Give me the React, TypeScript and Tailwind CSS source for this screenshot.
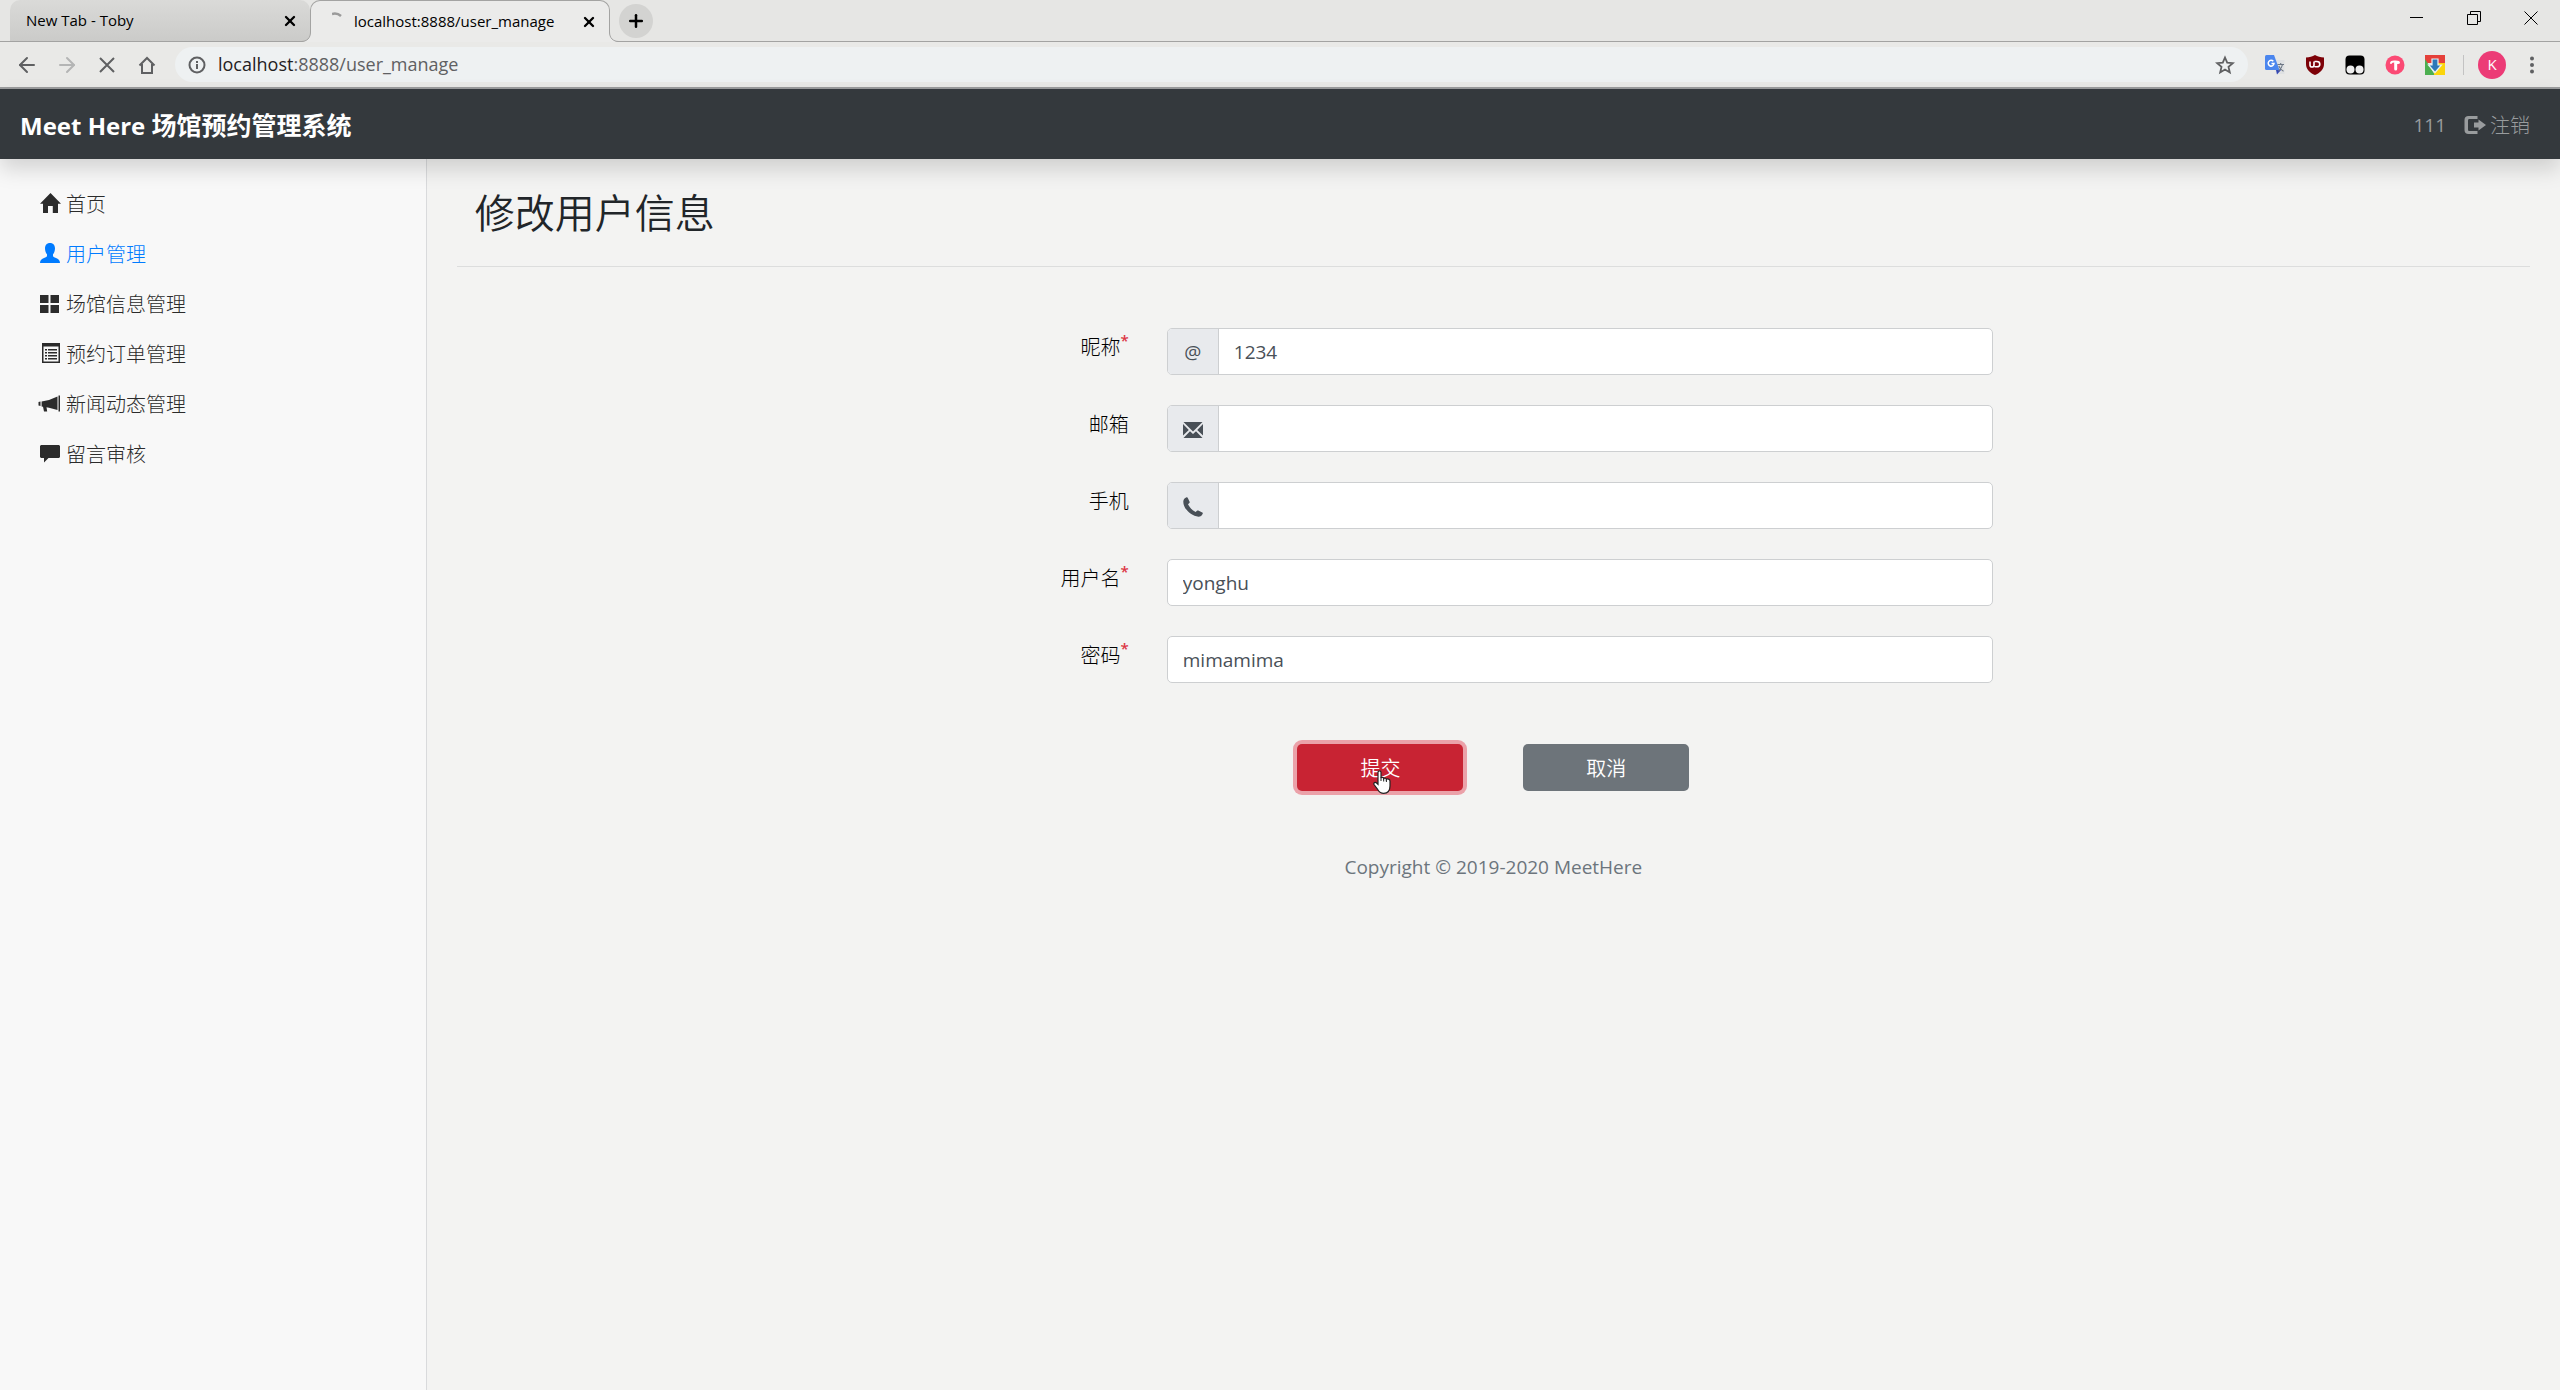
import React from 'react';
import { ArrowLeft, ArrowRight, Plus, X } from 'lucide-react';

type GlyphName = 'home' | 'user' | 'grid' | 'list' | 'bullhorn' | 'comment' | 'mail' | 'phone' | 'logout';

const Glyph: React.FC<{ name: GlyphName; className?: string }> = ({ name, className = 'h-5 w-5' }) => {
  const shapes: Record<GlyphName, React.ReactNode> = {
    home: <path d="M10.500-1 21 9.800h-3V19h-5.200v-7H8v7H3V9.800H0L10.500-1Z" />,
    user: (
      <path d="M10-1c3.200 0 5 2.200 5 5.300 0 2.600-.8 4.700-2 6V12c0 .8 1.200 1.300 3 2.100 2.200.9 3.900 1.900 4 4.900H0c.1-3 1.800-4 4-4.900 1.800-.8 3-1.300 3-2.100v-1.700c-1.200-1.300-2-3.400-2-6C5 1.200 6.800-1 10-1Z" />
    ),
    grid: <path d="M0 1h8.500v8H0zM10.500 1H19v8h-8.500zM0 11h8.500v8H0zM10.500 11H19v8h-8.500z" />,
    list: (
      <path
        fillRule="evenodd"
        d="M2-1h18v20H2V-1Zm1.500 3.500v15h15v-15h-15ZM5 5h2v1.500H5V5Zm3 0h9v1.500H8V5ZM5 8h2v1.500H5V8Zm3 0h9v1.500H8V8Zm-3 3h2v1.500H5V11Zm3 0h9v1.500H8V11Zm-3 3h2v1.500H5V14Zm3 0h9v1.500H8V14Z"
      />
    ),
    bullhorn: (
      <path d="M18.500 1.500H20v16h-1.500zM17.500 2.500V16L9 13.700l-2.500-.4.700 4.200H4l-1-4.700-1.400-.3v-5L9 6l8.500-3.500ZM-1.500 8 .5 7.500V12l-2-.5z" />
    ),
    comment: <path d="M1 1h18l1 1v11l-1 1H8.500l-4.500 4.500V14H1l-1-1V2l1-1Z" />,
    mail: (
      <path d="M.5 2h19L10 11.500.5 2ZM0 4l5.800 6L0 15.500V4Zm20 0v11.500L14.200 10 20 4ZM7 11.200l3 2.800 3-2.800 6.500 6.800H.5L7 11.200Z" />
    ),
    phone: (
      <path d="M.3 4.500C.4 2.500 1.800 1 3.500.3c.6-.2 1 0 1.200.5l1.900 3.900c.2.500.1.900-.3 1.300L5 7.300c1.600 3.300 4.200 6 7.600 7.700l1.400-1.200c.4-.4.8-.4 1.300-.2l4 2c.5.3.7.7.4 1.200-.8 1.900-2.200 3-4.200 3C7.500 18.500.2 11.500.3 4.500Z" />
    ),
    logout: (
      <>
        <path d="M13.500 1v3h-8C4.500 4 4 4.500 4 5.500v9c0 1 .5 1.500 1.500 1.500h8v3h-9C2 19 .5 17.500.5 15V5C.5 2.500 2 1 4.500 1h9Z" />
        <path d="m14.500 4.500 7.500 5.500-7.500 5.500v-3H10v-5h4.500z" />
      </>
    ),
  };
  return (
    <svg viewBox="0 0 20 20" className={`shrink-0 overflow-visible fill-current ${className}`} aria-hidden="true">
      {shapes[name]}
    </svg>
  );
};

const menu: { label: string; icon: GlyphName; active?: boolean }[] = [
  { label: '首页', icon: 'home' },
  { label: '用户管理', icon: 'user', active: true },
  { label: '场馆信息管理', icon: 'grid' },
  { label: '预约订单管理', icon: 'list' },
  { label: '新闻动态管理', icon: 'bullhorn' },
  { label: '留言审核', icon: 'comment' },
];

const fields: { id: string; label: string; required?: boolean; addon?: React.ReactNode; value: string }[] = [
  { id: 'nickname', label: '昵称', required: true, addon: '@', value: '1234' },
  { id: 'email', label: '邮箱', addon: <Glyph name="mail" />, value: '' },
  { id: 'phone', label: '手机', addon: <Glyph name="phone" />, value: '' },
  { id: 'username', label: '用户名', required: true, value: 'yonghu' },
  { id: 'password', label: '密码', required: true, value: 'mimamima' },
];

const TabStrip: React.FC = () => (
  <div className="flex h-[42px] items-stretch border-b border-[#a3a3a2] bg-[#e6e6e4] pl-[10px] text-[15px] text-black">
    <div className="flex w-[300px] items-center justify-between rounded-t-[10px] bg-linear-to-b from-[#dadad8] to-[#cbcbc9] pr-[12px] pl-4">
      <span>New Tab - Toby</span>
      <button aria-label="Close tab">
        <X className="h-4 w-4" strokeWidth={3.5} />
      </button>
    </div>
    <div className="relative -mb-px flex w-[300px] items-center rounded-t-[10px] border border-b-0 border-[#a3a3a2] bg-[#ebebea] pr-[12px] pl-[21px]">
      <svg viewBox="0 0 10 10" className="absolute bottom-0 -left-[10px] h-[10px] w-[10px]" aria-hidden="true">
        <path d="M10 0v10H0C6 9.500 9.500 6 9.500 0Z" fill="#ebebea" />
        <path d="M9.500 0C9.500 6 6 9.500 0 9.500" fill="none" stroke="#a3a3a2" />
      </svg>
      <svg viewBox="0 0 10 10" className="absolute -right-[10px] bottom-0 h-[10px] w-[10px]" aria-hidden="true">
        <path d="M0 0v10h10C4 9.500.5 6 .5 0Z" fill="#ebebea" />
        <path d="M.5 0C.5 6 4 9.500 10 9.500" fill="none" stroke="#a3a3a2" />
      </svg>
      <svg viewBox="0 0 20 20" className="mr-[2px] h-5 w-5" aria-hidden="true">
        <path d="M0 2Q5 .5 9 4" fill="none" stroke="#9a9a9a" strokeWidth="2.500" />
      </svg>
      <span className="grow">localhost:8888/user_manage</span>
      <button aria-label="Close tab">
        <X className="h-4 w-4" strokeWidth={3.5} />
      </button>
    </div>
    <button aria-label="New tab" className="ml-[9px] flex h-[34px] w-[34px] items-center justify-center self-center rounded-full bg-[#d3d3d1]">
      <Plus className="h-5 w-5" strokeWidth={3} />
    </button>
    <div className="ml-auto flex items-start pt-[11px] pr-[22px]">
      <button aria-label="Minimize" className="mr-[43px]">
        <svg viewBox="0 0 14 14" className="h-[14px] w-[14px]">
          <path d="M0 6.500h13" stroke="#000" />
        </svg>
      </button>
      <button aria-label="Restore" className="mr-[43px]">
        <svg viewBox="0 0 14 14" className="h-[14px] w-[14px]" fill="none" stroke="#000">
          <path d="M.5 3.500h10v10H.5zM3.500 3.500v-3h10v10h-3" />
        </svg>
      </button>
      <button aria-label="Close window">
        <svg viewBox="0 0 14 14" className="h-[14px] w-[14px]" fill="none" stroke="#000">
          <path d="m.5.5 13 13M13.500.5l-13 13" />
        </svg>
      </button>
    </div>
  </div>
);

const Extensions: React.FC = () => (
  <>
    <button aria-label="Translate" className="flex w-10 justify-center">
      <svg viewBox="0 0 20 20" className="h-5 w-5">
        <path d="M8 5h11.500v14H11z" fill="#dfe1e3" />
        <path d="M0 1.500Q0 0 1.500 0H9l5.500 15H1.500Q0 15 0 13.500Z" fill="#4b86ee" />
        <path d="M11 15h5l-4 4.500z" fill="#3347b5" />
        <path d="M12.500 9.500H19M15.700 8v1.500M17.500 9.500c-.5 3-2 5-4 6.500M13.800 11c.8 2 2.300 4 4.700 5.300" fill="none" stroke="#6d7785" strokeWidth="1.100" />
        <path d="M8.300 6.300A2.900 2.900 0 1 0 9 8.500H6.500" fill="none" stroke="#fff" strokeWidth="1.500" />
      </svg>
    </button>
    <button aria-label="uBlock" className="flex w-10 justify-center">
      <svg viewBox="0 0 20 20" className="h-5 w-5">
        <path d="M10 0c2.500 1.700 5.500 2.300 9 2.400V9c0 5.500-4 9-9 11-5-2-9-5.500-9-11V2.400C4.500 2.300 7.500 1.700 10 0Z" fill="#7d0208" />
        <path d="M5 6.500V10c0 2.700 4 2.700 4 0V6.500M9.500 6.500h2.300c4 0 4 5.300 0 5.300H9.500" fill="none" stroke="#fff" strokeWidth="1.600" />
      </svg>
    </button>
    <button aria-label="Tampermonkey" className="flex w-10 justify-center">
      <svg viewBox="0 0 20 20" className="h-5 w-5">
        <rect x="0.500" y="0.500" width="19" height="19" rx="4" fill="#000" />
        <circle cx="5.500" cy="14.500" r="4" fill="#eee" />
        <circle cx="14.500" cy="14.500" r="4" fill="#eee" />
      </svg>
    </button>
    <button aria-label="Toby" className="flex w-10 justify-center">
      <svg viewBox="0 0 20 20" className="h-5 w-5">
        <circle cx="10" cy="10" r="9.500" fill="#fb4a74" />
        <path d="M6 8c.5-2 2.500-1.500 4.500-1.500S14 6.500 14 7.500 11 8 10.500 8" fill="none" stroke="#fff" strokeWidth="2" strokeLinecap="round" />
        <path d="M10.700 8v6" stroke="#fff" strokeWidth="3" strokeLinecap="round" />
      </svg>
    </button>
    <button aria-label="Downloads" className="flex w-10 justify-center">
      <svg viewBox="0 0 20 20" className="h-5 w-5">
        <path d="M0 0h20v8H0z" fill="#e5403a" />
        <path d="M0 4l10 16H0z" fill="#4caf50" />
        <path d="M10 8h10v12H9z" fill="#fbd50b" />
        <path d="M7 4h6v6h3.500L10 17.500 3.500 10H7z" fill="#2b78b8" stroke="#e8f1f6" strokeWidth="1.200" />
      </svg>
    </button>
  </>
);

const Toolbar: React.FC = () => (
  <div className="flex h-[47px] items-center border-b-2 border-[#9b9c9d] bg-[#e9e9e7] pr-[18px] pl-[7px] text-[#5f6062]">
    <button aria-label="Back" className="flex w-10 justify-center">
      <ArrowLeft className="h-6 w-6" strokeWidth={2} />
    </button>
    <button aria-label="Forward" className="flex w-10 justify-center text-[#b4b5b5]">
      <ArrowRight className="h-6 w-6" strokeWidth={2} />
    </button>
    <button aria-label="Stop" className="flex w-10 justify-center">
      <svg viewBox="0 0 16 16" className="h-4 w-4" fill="none" stroke="currentColor" strokeWidth="2">
        <path d="m1 1 14 14M15 1 1 15" />
      </svg>
    </button>
    <button aria-label="Home" className="flex w-10 justify-center">
      <svg viewBox="0 0 18 18" className="h-[18px] w-[18px]" fill="none" stroke="currentColor" strokeWidth="2">
        <path d="M1.500 9.500 9 2l7.500 7.500M4 8v9h10V8" />
      </svg>
    </button>
    <div className="ml-2 flex h-[35px] grow items-center rounded-full bg-[#eef1f2] pr-[13px] pl-[13px]">
      <svg viewBox="0 0 18 18" className="h-[18px] w-[18px]" fill="none" stroke="currentColor" strokeWidth="2" aria-hidden="true">
        <circle cx="9" cy="9" r="7.500" />
        <path d="M9 8v5M9 5v2" />
      </svg>
      <span className="ml-3 grow text-[18px]">
        <span className="text-[#1f2022]">localhost</span>:8888/user_manage
      </span>
      <button aria-label="Bookmark">
        <svg viewBox="0 0 20 20" className="h-5 w-5" fill="none" stroke="currentColor" strokeWidth="1.800">
          <path d="m10 2.500 2.200 5.200 5.600.5-4.300 3.700 1.300 5.500-4.800-2.900-4.800 2.900 1.300-5.500-4.300-3.700 5.600-.5z" />
        </svg>
      </button>
    </div>
    <div className="ml-[7px] flex items-center">
      <Extensions />
    </div>
    <div className="ml-2 h-5 w-px bg-[#c3c3c3]" />
    <button aria-label="Profile" className="ml-[14px] flex h-7 w-7 items-center justify-center rounded-full bg-[#ec3b76] text-[15px] text-white">
      K
    </button>
    <button aria-label="Menu" className="ml-4 flex w-5 justify-center">
      <svg viewBox="0 0 4 18" className="h-[18px] w-1 fill-current">
        <circle cx="2" cy="2.500" r="2" />
        <circle cx="2" cy="9" r="2" />
        <circle cx="2" cy="15.500" r="2" />
      </svg>
    </button>
  </div>
);

const App: React.FC = () => {
  return (
    <div className="flex min-h-screen flex-col bg-[#f3f3f2] font-['Open_Sans','Noto_Sans_CJK_SC',sans-serif] text-[#212529]">
      <TabStrip />
      <Toolbar />

      {/* Navbar */}
      <header className="z-10 flex h-[70px] items-center justify-between bg-[#34393d] pt-[2px] pr-[30px] pl-5 shadow-[0_10px_20px_rgba(0,0,0,0.15)]">
        <a href="#" className="text-[24px] font-bold text-white">
          Meet Here <span className="font-['Noto_Sans_CJK_SC',sans-serif] text-[25px]">场馆预约管理系统</span>
        </a>
        <nav className="flex items-center text-[19px] text-[#999c9e]">
          <span>111</span>
          <a href="#" className="ml-[18px] flex items-center gap-[6px] font-['Noto_Sans_CJK_SC',sans-serif] text-[20px] font-light">
            <Glyph name="logout" />
            注销
          </a>
        </nav>
      </header>

      <div className="flex grow">
        {/* Sidebar */}
        <aside className="w-1/6 border-r border-[#d9dadc] bg-[#f8f8f8] pt-5 pl-10">
          <ul>
            {menu.map((item) => (
              <li key={item.label}>
                <a
                  href="#"
                  className={`flex h-[50px] items-center gap-[6px] font-['Noto_Sans_CJK_SC',sans-serif] text-[20px] font-light ${
                    item.active ? 'text-[#007bff]' : 'text-[#2b2b2b]'
                  }`}
                >
                  <Glyph name={item.icon} />
                  {item.label}
                </a>
              </li>
            ))}
          </ul>
        </aside>

        <main className="grow px-[30px] pt-7">
          <h1 className="border-b border-[#dcdddd] pb-[31px] pl-[18px] font-['Noto_Sans_CJK_SC',sans-serif] text-[40px] leading-[48px] font-[350]">
            修改用户信息
          </h1>

          <form className="mt-[61px]" onSubmit={(e) => e.preventDefault()}>
            {fields.map((field) => (
              <div key={field.id} className="mb-[30px] grid grid-cols-12 items-start">
                <label
                  htmlFor={field.id}
                  className="col-span-4 flex justify-end pr-[19px] font-['Noto_Sans_CJK_SC',sans-serif] text-[20px] leading-[38px] font-light text-black"
                >
                  {field.label}
                  {field.required && (
                    <span className="font-['Open_Sans',sans-serif] text-[15px] leading-6 font-semibold text-[#dc3545]">*</span>
                  )}
                </label>
                <div className="col-span-5 px-[19px]">
                  <div className="flex h-[47px] overflow-hidden rounded-[5px] border border-[#cdcfd1] bg-white text-[19px] text-[#495057]">
                    {field.addon && (
                      <span className="flex w-[51px] shrink-0 items-center justify-center border-r border-[#cdcfd1] bg-[#e8eaed] pt-[2px]">
                        {field.addon}
                      </span>
                    )}
                    <input id={field.id} type="text" defaultValue={field.value} className="min-w-0 grow px-[15px] pt-[2px] outline-none" />
                  </div>
                </div>
              </div>
            ))}

            <div className="mt-[61px] flex justify-center gap-[60px] font-['Noto_Sans_CJK_SC',sans-serif] text-[20px] font-[350] text-white">
              <button type="submit" className="relative h-[47px] w-[8%] rounded-[5px] bg-[#c82333] shadow-[0_0_0_4px_#eba1a9]">
                提交
                <svg viewBox="0 0 18 24" className="absolute top-[26px] left-[76px] h-6 w-[18px]" aria-hidden="true">
                  <path
                    d="M5 2.200C5 .3 8 .3 8 2.200V8c.5-1 2.700-.8 2.700.6.6-.9 2.700-.6 2.700.8.7-.8 3.600-.5 3.600 1.500V16c0 4.500-2.500 7.300-6.300 7.300-3 0-4.500-1.300-5.900-3.600L1 14.500c-.8-1.700 1.300-2.800 2.600-1.500L5 14.300Z"
                    fill="#fff"
                    stroke="#222"
                    strokeWidth="1.200"
                  />
                  <path d="M8 7.500V11M10.700 8.500V11.500M13.400 9.500V12" stroke="#222" strokeWidth="1" />
                </svg>
              </button>
              <button type="button" className="h-[47px] w-[8%] rounded-[5px] bg-[#6d747a]">
                取消
              </button>
            </div>
          </form>

          <footer className="mt-[61px] text-center text-[19px] leading-[30px] text-[#6c757d]">Copyright © 2019-2020 MeetHere</footer>
        </main>
      </div>
    </div>
  );
};

export default App;
